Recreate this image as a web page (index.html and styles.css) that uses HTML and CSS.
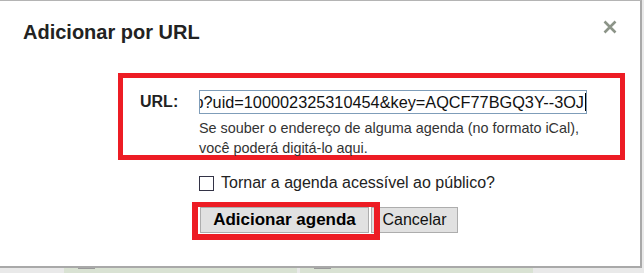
FILE: index.html
```html
<!DOCTYPE html>
<html lang="pt">
<head>
<meta charset="utf-8">
<title>Adicionar por URL</title>
<link rel="stylesheet" href="styles.css">
</head>
<body>
<div class="dialog">
  <div class="header">
    <h1 class="title">Adicionar por URL</h1>
    <svg class="close" width="14" height="14" viewBox="0 0 14 14" aria-label="Fechar">
      <path d="M1.5 1.5 L12.5 12.5 M12.5 1.5 L1.5 12.5" stroke="#8c9488" stroke-width="2.6" stroke-linecap="butt" fill="none"/>
    </svg>
  </div>
  <div class="url-box">
    <div class="url-grid">
      <label class="url-label">URL:</label>
      <div class="url-input"><span class="url-text">p?uid=100002325310454&amp;key=AQCF77BGQ3Y--3OJ</span><span class="caret"></span></div>
      <div></div>
      <p class="hint">Se souber o endereço de alguma agenda (no formato iCal),<br>você poderá digitá-lo aqui.</p>
    </div>
  </div>
  <div class="public-row">
    <span class="checkbox"></span>
    <span class="public-text">Tornar a agenda acessível ao público?</span>
  </div>
  <div class="buttons">
    <button class="btn btn-primary">Adicionar agenda</button>
    <button class="btn">Cancelar</button>
    <div class="highlight"></div>
  </div>
</div>
<div class="backdrop">
  <div class="panel"><span class="grip"></span></div>
  <div class="panel"><span class="grip"></span></div>
</div>
</body>
</html>
```

FILE: styles.css
```css
* { box-sizing: border-box; }

html, body {
  margin: 0;
  padding: 0;
}

body {
  background: #e9e9e9;
  font-family: "Liberation Sans", Arial, sans-serif;
  color: #222;
  width: 644px;
  height: 273px;
  overflow: hidden;
}

.dialog {
  width: 642px;
  height: 268px;
  background: #fff;
  border-top: 1px solid #b4b4b4;
  border-right: 2px solid #a9a9a9;
  border-bottom: 2px solid #a9a9a9;
}

.header {
  display: flex;
  justify-content: space-between;
  align-items: flex-start;
  padding: 20px 23px 0 23px;
}

.title {
  margin: 0;
  font-size: 20px;
  line-height: 23px;
  font-weight: bold;
  color: #222;
}

.close {
  display: block;
  margin-top: -1px;
}

.url-box {
  margin: 29px 0 0 118px;
  width: 507px;
  height: 87px;
  border: 5px solid #ed1c24;
  padding: 12px 0 0 17px;
}

.url-grid {
  display: grid;
  grid-template-columns: 59px 388px;
}

.url-label {
  font-size: 16px;
  font-weight: bold;
  line-height: 24px;
  color: #222;
}

.url-input {
  height: 24px;
  border: 1px solid #7f9db9;
  display: flex;
  justify-content: flex-end;
  align-items: center;
  overflow: hidden;
  white-space: nowrap;
  font-size: 16.3px;
  line-height: 22px;
  color: #111;
  padding-right: 0;
}

.url-text {
  flex: none;
}

.caret {
  flex: none;
  width: 1px;
  height: 18px;
  background: #000;
  margin-left: 1px;
}

.hint {
  margin: 4px 0 0 0;
  font-size: 14.4px;
  line-height: 20px;
  color: #333;
}

.public-row {
  display: flex;
  align-items: center;
  margin: 14px 0 0 199px;
  height: 18px;
}

.checkbox {
  width: 15px;
  height: 15px;
  border: 1px solid #333346;
  background: #fff;
  margin-right: 7px;
  flex: none;
}

.public-text {
  font-size: 16px;
  line-height: 18px;
  color: #222;
}

.buttons {
  position: relative;
  display: flex;
  gap: 2px;
  margin: 15px 0 0 200px;
}

.btn {
  height: 26px;
  margin: 0;
  padding: 0;
  border: 1px solid #adadad;
  background: #e1e1e1;
  font-family: "Liberation Sans", Arial, sans-serif;
  font-size: 16px;
  color: #111;
  border-radius: 0;
  width: 87px;
}

.btn-primary {
  width: 169px;
  font-weight: bold;
  font-size: 17px;
  color: #000;
}

.highlight {
  position: absolute;
  left: -8px;
  top: -5px;
  width: 188px;
  height: 38px;
  border: 6px solid #ed1c24;
  border-top-width: 5px;
  pointer-events: none;
}

.backdrop {
  display: flex;
  height: 5px;
  padding-left: 64px;
  gap: 3px;
}

.panel {
  position: relative;
  width: 233px;
  height: 5px;
  background: #d9e2d3;
}

.grip {
  position: absolute;
  left: 14px;
  top: 0;
  width: 17px;
  height: 1px;
  background: #9a9a9a;
}
```
